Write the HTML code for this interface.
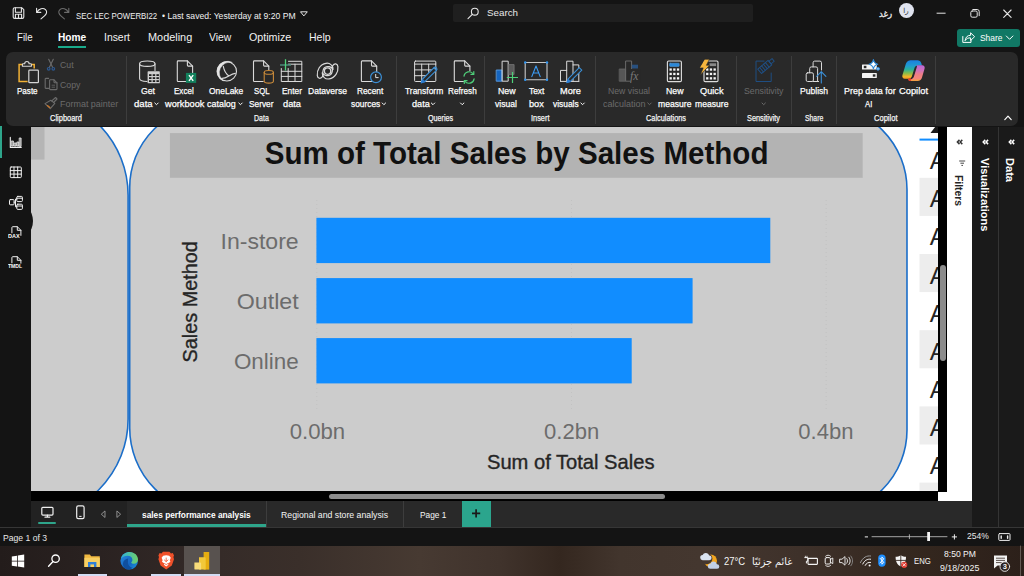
<!DOCTYPE html>
<html lang="en">
<head>
<meta charset="utf-8">
<title>SEC LEC POWERBI22</title>
<style>
*{box-sizing:border-box;margin:0;padding:0}
html,body{width:1024px;height:576px;overflow:hidden;background:#141414}
body{position:relative;font-family:"Liberation Sans","DejaVu Sans",sans-serif;color:#fff;font-size:9.3px}
.abs{position:absolute}
.t{position:absolute;white-space:nowrap;line-height:1;transform-origin:0 0;color:#fff}
svg{position:absolute;left:0;top:0;overflow:hidden}
#ribbon{left:6px;top:52.200px;width:1011.600px;height:73.700px;background:#292929;border-radius:7px}
.sep{position:absolute;top:55.500px;width:1px;height:68px;background:#3d3d3d}
#rail{left:0;top:127px;width:30.500px;height:400px;background:#141414}
#canvas{left:30.500px;top:127px;width:907.500px;height:364.300px;background:#fff;overflow:hidden}
#vscroll{left:938px;top:127px;width:9.200px;height:364.500px;background:#000}
#hscroll{left:30.500px;top:491.300px;width:907.500px;height:9.700px;background:#000}
#filters{left:938px;top:127px;width:33.800px;height:374px;background:#fff}
#viz{left:971.800px;top:127px;width:26.200px;height:400.400px;background:#1a1a1a}
#data{left:998px;top:127px;width:26px;height:400.400px;background:#1a1a1a;border-left:1px solid #343434}
.vt{position:absolute;white-space:nowrap;transform-origin:0 0;line-height:1}
#tabs{left:30.500px;top:501px;width:941.300px;height:26.400px;background:#222}
#status{left:0;top:527px;width:1024px;height:19px;background:#141414;border-top:1px solid #363636}
#taskbar{left:0;top:546px;width:1024px;height:30px;background:linear-gradient(90deg,#231c1b 0.0%,#2a2221 9.8%,#352b28 21.5%,#3a2f2a 29.3%,#473a32 41.0%,#40332c 48.8%,#34271f 54.7%,#42352d 60.5%,#44372f 68.4%,#3e312a 78.1%,#35281f 87.9%,#2c201a 100.0%)}
</style>
</head>
<body>

<!-- ===== TITLE BAR ===== -->
<div class="abs" style="left:453px;top:4px;width:300px;height:18px;background:#1f1f1f;border-radius:2px"></div>
<span class="t" style="left:487.00px;top:8.47px;font-size:9.6px;color:#e8e8e8;transform:scaleX(1.020);">Search</span>
<span class="t" style="left:76.40px;top:10.97px;font-size:9.6px;color:#f0f0f0;transform:scaleX(0.814);">SEC LEC POWERBI22</span>
<span class="t" style="left:162.00px;top:10.97px;font-size:9.6px;color:#f0f0f0;transform:scaleX(0.897);">• Last saved: Yesterday at 9:20 PM</span>
<div class="abs" style="left:898.700px;top:2.700px;width:15.600px;height:15.600px;border-radius:50%;background:#dfe3ef"></div>
<span class="t" style="left:879.00px;top:8.96px;font-size:9.5px;color:#f0f0f0;font-family:'Liberation Sans','DejaVu Sans',sans-serif;transform:scaleX(0.894);-webkit-text-stroke:0.3px #f0f0f0;direction:rtl;">رغد</span>
<span class="t" style="left:903.20px;top:7.47px;font-size:7px;color:#2a2a2a;font-family:'Liberation Sans','DejaVu Sans',sans-serif;direction:rtl;">را</span>
<div class="abs" style="left:956.5px;top:28.5px;width:63px;height:18px;background:#117865;border-radius:3px"></div>
<span class="t" style="left:980.00px;top:33.17px;font-size:9.6px;transform:scaleX(0.879);">Share</span>
<!-- ===== MENU ===== -->
<span class="t" style="left:17.20px;top:32.43px;font-size:10.6px;color:#f2f2f2;transform:scaleX(0.914);">File</span>
<span class="t" style="left:58.00px;top:32.43px;font-size:10.6px;font-weight:700;transform:scaleX(0.958);">Home</span>
<div class="abs" style="left:58px;top:45.6px;width:28.2px;height:2px;background:#1aab8b"></div>
<span class="t" style="left:103.70px;top:32.43px;font-size:10.6px;color:#f2f2f2;transform:scaleX(0.981);">Insert</span>
<span class="t" style="left:147.50px;top:32.43px;font-size:10.6px;color:#f2f2f2;transform:scaleX(1.028);">Modeling</span>
<span class="t" style="left:209.30px;top:32.43px;font-size:10.6px;color:#f2f2f2;transform:scaleX(0.979);">View</span>
<span class="t" style="left:249.20px;top:32.43px;font-size:10.6px;color:#f2f2f2;transform:scaleX(1.010);">Optimize</span>
<span class="t" style="left:309.00px;top:32.43px;font-size:10.6px;color:#f2f2f2;transform:scaleX(0.991);">Help</span>
<svg width="1024" height="52" viewBox="0 0 1024 52" fill="none" stroke="#e6e6e6" stroke-width="1.1" stroke-linecap="round" stroke-linejoin="round">
<!-- save -->
<path d="M13.2 9.3a1.5 1.5 0 0 1 1.5-1.5h7.2l1.9 1.9v7.2a1.5 1.5 0 0 1-1.5 1.5h-7.6a1.5 1.5 0 0 1-1.5-1.5z"/>
<path d="M15.4 7.9v4.4h6V7.9M15.4 18.3v-4h6.2v4M18.5 14.5v3.6"/>
<!-- undo -->
<path d="M36.6 8.2v4.2h4.2M36.9 12.2c2-3.6 6.2-4.800 8.600-2.600 2.2 2.100 .9 4.600-1 6.300l-3.500 3"/>
<!-- redo -->
<path stroke="#6b6b6b" d="M68.800 8.200v4.200h-4.200M68.500 12.200c-2-3.600-6.200-4.800-8.600-2.600-2.200 2.100-.9 4.600 1 6.300l3.500 3"/>
<!-- title dropdown -->
<path stroke-width="1" d="M300.900 11.800h6.400l-3.200 3.800z"/>
<!-- search icon -->
<circle cx="474.800" cy="11.700" r="3.400"/><path d="M472.300 14.300l-4.300 4.300"/>
<!-- window controls -->
<path stroke-width="1" d="M937 13.200h8.200"/>
<rect x="970.800" y="11" width="6.400" height="6.200" rx="1.400" stroke-width="1"/><path stroke-width="1" d="M972.800 9.500h4.400a2 2 0 0 1 2 2v4.200"/>
<path stroke-width="1.100" d="M1003.700 10l7.400 7.400M1011.100 10l-7.400 7.400"/>
<!-- share icon -->
<path stroke="#fff" stroke-width="1" d="M962.800 36.500v5.900h8.200v-2M965.200 40.300c.3-3.200 2.300-5 5.400-5v-2.500l4 3.900-4 3.800v-2.600c-2.400-.2-4.100.6-5.400 2.400z"/>
<path stroke="#fff" stroke-width="1" d="M1006.300 36l3.300 3.300 3.300-3.300"/>
</svg>
<!-- ===== RIBBON ===== -->
<div id="ribbon" class="abs"></div>
<div class="sep" style="left:125.9px"></div>
<div class="sep" style="left:395.9px"></div>
<div class="sep" style="left:484.0px"></div>
<div class="sep" style="left:595.3px"></div>
<div class="sep" style="left:736.0px"></div>
<div class="sep" style="left:790.5px"></div>
<div class="sep" style="left:835.9px"></div>
<div class="sep" style="left:934.6px"></div>
<span class="t" style="left:16.90px;top:86.34px;font-size:9.4px;transform:scaleX(0.859);-webkit-text-stroke:0.25px #fff;">Paste</span>
<span class="t" style="left:60.00px;top:60.04px;font-size:9.4px;color:#6b6b6b;transform:scaleX(0.932);">Cut</span>
<span class="t" style="left:60.00px;top:79.64px;font-size:9.4px;color:#6b6b6b;transform:scaleX(0.937);">Copy</span>
<span class="t" style="left:60.00px;top:99.04px;font-size:9.4px;color:#6b6b6b;transform:scaleX(0.956);">Format painter</span>
<span class="t" style="left:50.00px;top:114.05px;font-size:8.8px;color:#f4f4f4;transform:scaleX(0.850);-webkit-text-stroke:0.25px #f4f4f4;">Clipboard</span>
<span class="t" style="left:140.80px;top:86.34px;font-size:9.4px;transform:scaleX(0.926);-webkit-text-stroke:0.25px #fff;">Get</span>
<span class="t" style="left:134.40px;top:98.74px;font-size:9.4px;transform:scaleX(1.019);-webkit-text-stroke:0.25px #fff;">data</span>
<span class="t" style="left:174.40px;top:86.34px;font-size:9.4px;transform:scaleX(0.859);-webkit-text-stroke:0.25px #fff;">Excel</span>
<span class="t" style="left:164.50px;top:98.74px;font-size:9.4px;transform:scaleX(0.982);-webkit-text-stroke:0.25px #fff;">workbook</span>
<span class="t" style="left:208.70px;top:86.34px;font-size:9.4px;transform:scaleX(0.901);-webkit-text-stroke:0.25px #fff;">OneLake</span>
<span class="t" style="left:207.20px;top:98.74px;font-size:9.4px;transform:scaleX(0.953);-webkit-text-stroke:0.25px #fff;">catalog</span>
<span class="t" style="left:253.60px;top:86.34px;font-size:9.4px;transform:scaleX(0.832);-webkit-text-stroke:0.25px #fff;">SQL</span>
<span class="t" style="left:249.20px;top:98.74px;font-size:9.4px;transform:scaleX(0.887);-webkit-text-stroke:0.25px #fff;">Server</span>
<span class="t" style="left:281.80px;top:86.34px;font-size:9.4px;transform:scaleX(0.893);-webkit-text-stroke:0.25px #fff;">Enter</span>
<span class="t" style="left:282.50px;top:98.74px;font-size:9.4px;transform:scaleX(0.986);-webkit-text-stroke:0.25px #fff;">data</span>
<span class="t" style="left:308.30px;top:86.34px;font-size:9.4px;transform:scaleX(0.913);-webkit-text-stroke:0.25px #fff;">Dataverse</span>
<span class="t" style="left:356.70px;top:86.34px;font-size:9.4px;transform:scaleX(0.885);-webkit-text-stroke:0.25px #fff;">Recent</span>
<span class="t" style="left:350.50px;top:98.74px;font-size:9.4px;transform:scaleX(0.890);-webkit-text-stroke:0.25px #fff;">sources</span>
<span class="t" style="left:254.40px;top:114.05px;font-size:8.8px;color:#f4f4f4;transform:scaleX(0.796);-webkit-text-stroke:0.25px #f4f4f4;">Data</span>
<span class="t" style="left:405.40px;top:86.34px;font-size:9.4px;transform:scaleX(0.902);-webkit-text-stroke:0.25px #fff;">Transform</span>
<span class="t" style="left:411.60px;top:98.74px;font-size:9.4px;transform:scaleX(0.976);-webkit-text-stroke:0.25px #fff;">data</span>
<span class="t" style="left:448.00px;top:86.34px;font-size:9.4px;transform:scaleX(0.874);-webkit-text-stroke:0.25px #fff;">Refresh</span>
<span class="t" style="left:428.40px;top:114.05px;font-size:8.8px;color:#f4f4f4;transform:scaleX(0.812);-webkit-text-stroke:0.25px #f4f4f4;">Queries</span>
<span class="t" style="left:497.50px;top:86.34px;font-size:9.4px;transform:scaleX(0.938);-webkit-text-stroke:0.25px #fff;">New</span>
<span class="t" style="left:495.10px;top:98.74px;font-size:9.4px;transform:scaleX(0.918);-webkit-text-stroke:0.25px #fff;">visual</span>
<span class="t" style="left:528.70px;top:86.34px;font-size:9.4px;transform:scaleX(0.896);-webkit-text-stroke:0.25px #fff;">Text</span>
<span class="t" style="left:528.70px;top:98.74px;font-size:9.4px;transform:scaleX(0.979);-webkit-text-stroke:0.25px #fff;">box</span>
<span class="t" style="left:559.60px;top:86.34px;font-size:9.4px;transform:scaleX(0.983);-webkit-text-stroke:0.25px #fff;">More</span>
<span class="t" style="left:553.20px;top:98.74px;font-size:9.4px;transform:scaleX(0.893);-webkit-text-stroke:0.25px #fff;">visuals</span>
<span class="t" style="left:531.10px;top:114.05px;font-size:8.8px;color:#f4f4f4;transform:scaleX(0.841);-webkit-text-stroke:0.25px #f4f4f4;">Insert</span>
<span class="t" style="left:608.00px;top:86.34px;font-size:9.4px;color:#6b6b6b;transform:scaleX(0.927);">New visual</span>
<span class="t" style="left:603.40px;top:98.74px;font-size:9.4px;color:#6b6b6b;transform:scaleX(0.962);">calculation</span>
<span class="t" style="left:666.00px;top:86.34px;font-size:9.4px;transform:scaleX(0.933);-webkit-text-stroke:0.25px #fff;">New</span>
<span class="t" style="left:658.00px;top:98.74px;font-size:9.4px;transform:scaleX(0.918);-webkit-text-stroke:0.25px #fff;">measure</span>
<span class="t" style="left:699.50px;top:86.34px;font-size:9.4px;transform:scaleX(0.985);-webkit-text-stroke:0.25px #fff;">Quick</span>
<span class="t" style="left:695.10px;top:98.74px;font-size:9.4px;transform:scaleX(0.916);-webkit-text-stroke:0.25px #fff;">measure</span>
<span class="t" style="left:646.00px;top:114.05px;font-size:8.8px;color:#f4f4f4;transform:scaleX(0.835);-webkit-text-stroke:0.25px #f4f4f4;">Calculations</span>
<span class="t" style="left:744.10px;top:86.34px;font-size:9.4px;color:#6b6b6b;transform:scaleX(0.936);">Sensitivity</span>
<span class="t" style="left:747.20px;top:114.05px;font-size:8.8px;color:#f4f4f4;transform:scaleX(0.833);-webkit-text-stroke:0.25px #f4f4f4;">Sensitivity</span>
<span class="t" style="left:799.60px;top:86.34px;font-size:9.4px;transform:scaleX(0.914);-webkit-text-stroke:0.25px #fff;">Publish</span>
<span class="t" style="left:804.90px;top:114.05px;font-size:8.8px;color:#f4f4f4;transform:scaleX(0.775);-webkit-text-stroke:0.25px #f4f4f4;">Share</span>
<span class="t" style="left:844.20px;top:86.34px;font-size:9.4px;transform:scaleX(0.952);-webkit-text-stroke:0.25px #fff;">Prep data for</span>
<span class="t" style="left:865.40px;top:98.74px;font-size:9.4px;transform:scaleX(0.824);-webkit-text-stroke:0.25px #fff;">AI</span>
<span class="t" style="left:898.50px;top:86.34px;font-size:9.4px;transform:scaleX(0.994);-webkit-text-stroke:0.25px #fff;">Copilot</span>
<span class="t" style="left:873.90px;top:114.05px;font-size:8.8px;color:#f4f4f4;transform:scaleX(0.858);-webkit-text-stroke:0.25px #f4f4f4;">Copilot</span>
<svg width="1024" height="130" viewBox="0 0 1024 130" fill="none" stroke-width="1.1" stroke-linejoin="round" stroke-linecap="round">
<path d="M154.8 103.0l1.7 1.7 1.7-1.7" stroke="#fff" stroke-width="1" fill="none"/>
<path d="M238.8 103.0l1.7 1.7 1.7-1.7" stroke="#fff" stroke-width="1" fill="none"/>
<path d="M382.2 103.0l1.7 1.7 1.7-1.7" stroke="#fff" stroke-width="1" fill="none"/>
<path d="M431.3 103.0l1.7 1.7 1.7-1.7" stroke="#fff" stroke-width="1" fill="none"/>
<path d="M460.5 103.0l1.7 1.7 1.7-1.7" stroke="#fff" stroke-width="1" fill="none"/>
<path d="M580.9 103.0l1.7 1.7 1.7-1.7" stroke="#fff" stroke-width="1" fill="none"/>
<path d="M647.8 103.0l1.7 1.7 1.7-1.7" stroke="#6b6b6b" stroke-width="1" fill="none"/>
<path d="M762.0 103.0l1.7 1.7 1.7-1.7" stroke="#6b6b6b" stroke-width="1" fill="none"/>
<path d="M1004.800 119.600l3.200-3.400 3.200 3.400" stroke="#fff" stroke-width="1.2"/>
<path d="M22.600 64.400H19.100V81.400H27.600M31.200 64.400H34.200V68.600" stroke="#f2b134" stroke-width="1.5" stroke-linejoin="miter" stroke-linecap="butt"/>
<path d="M22.400 66.300V64.500a.8 .8 0 0 1 .8-.8H24.700a2.200 2.200 0 0 1 4.400 0H30.600a.8 .8 0 0 1 .8 .8V66.300z" stroke="#d8d8d8"/>
<rect x="28.800" y="70.100" width="9.600" height="12.600" rx=".8" stroke="#d4d4d4" stroke-width="1.200"/>
<path d="M48.700 59.200l4 8.300M53.300 59.200l-4 8.300" stroke="#6b6b6b"/><circle cx="48.700" cy="68.800" r="1.300" stroke="#2c578e" stroke-width="1.200"/><circle cx="53.300" cy="68.800" r="1.300" stroke="#2c578e" stroke-width="1.200"/>
<path d="M48.600 88.400H45.800a.6 .6 0 0 1-.6-.6V79a.6 .6 0 0 1 .6-.6H48.600" stroke="#6b6b6b"/><path d="M50.4 79.8H54.0L57 82.8V88.8a.8 .8 0 0 1-.8 .8H50.4a.8 .8 0 0 1-.8-.8V80.6a.8 .8 0 0 1 .8-.8z" stroke="#6b6b6b"/><path d="M54.0 79.8v2.2a.8 .8 0 0 0 .8 .8h2.2" stroke="#6b6b6b"/>
<path d="M52 85.200h2.600M52 87.200h2.600" stroke="#6b6b6b" stroke-width=".8"/>
<path d="M45 103.600L50.300 108.600L54.800 103.400L50.800 100.200z" stroke="#6b6b6b"/><path d="M51.800 100.900L55.600 97.500L57 99L53.600 102.500" stroke="#6b6b6b"/><path d="M47.400 105.600l2.400 2" stroke="#c8762a" stroke-width="1.300"/>
<ellipse cx="147.300" cy="63.700" rx="7.700" ry="2.700" stroke="#dadada"/><path d="M139.600 63.700V78.600c0 1.600 3 2.800 7.400 2.900M155 63.700V70.600" stroke="#dadada"/>
<rect x="147.600" y="71.300" width="12.200" height="12" rx=".6" fill="#cfcfcf" stroke="none"/>
<rect x="149.0" y="74.2" width="2.500" height="1.800" fill="#1e1e1e" stroke="none"/>
<rect x="152.7" y="74.2" width="2.500" height="1.800" fill="#1e1e1e" stroke="none"/>
<rect x="156.4" y="74.2" width="2.500" height="1.800" fill="#1e1e1e" stroke="none"/>
<rect x="149.0" y="77.2" width="2.500" height="1.800" fill="#1e1e1e" stroke="none"/>
<rect x="152.7" y="77.2" width="2.500" height="1.800" fill="#1e1e1e" stroke="none"/>
<rect x="156.4" y="77.2" width="2.500" height="1.800" fill="#1e1e1e" stroke="none"/>
<rect x="149.0" y="80.2" width="2.500" height="1.800" fill="#1e1e1e" stroke="none"/>
<rect x="152.7" y="80.2" width="2.500" height="1.800" fill="#1e1e1e" stroke="none"/>
<rect x="156.4" y="80.2" width="2.500" height="1.800" fill="#1e1e1e" stroke="none"/>
<path d="M178.1 60.9H187.4L192.6 66.1V80.7a.8 .8 0 0 1-.8 .8H178.1a.8 .8 0 0 1-.8-.8V61.7a.8 .8 0 0 1 .8-.8z" stroke="#dadada"/><path d="M187.4 60.9v4.4a.8 .8 0 0 0 .8 .8h4.4" stroke="#dadada"/>
<rect x="185.900" y="72.900" width="10.300" height="10" fill="#12805c" stroke="none"/>
<path d="M189 75.200l4.200 5.600M193.200 75.200l-4.200 5.600" stroke="#fff" stroke-width="1.400" stroke-linecap="butt"/>
<circle cx="226.900" cy="71.400" r="9.600" stroke="#dadada" stroke-width="1.100"/>
<path d="M231.900 62.300A10.300 10.300 0 1 0 223.300 81A10.600 10.600 0 0 1 231.900 62.300z" fill="#e4e4e4" stroke="#e4e4e4" stroke-width=".5"/>
<path d="M223.300 66.400c.8 4.200 2.600 7.400 5.600 9.600M221.600 78.400c5.200 .4 8.600-4.800 13.600-5" stroke="#dadada" stroke-width="1.100"/>
<path d="M254.3 60.9H263.6L268.8 66.1V80.7a.8 .8 0 0 1-.8 .8H254.3a.8 .8 0 0 1-.8-.8V61.7a.8 .8 0 0 1 .8-.8z" stroke="#dadada"/><path d="M263.6 60.9v4.4a.8 .8 0 0 0 .8 .8h4.4" stroke="#dadada"/>
<rect x="263.600" y="70" width="10.400" height="13.800" fill="#292929" stroke="none"/>
<ellipse cx="268.800" cy="72.400" rx="4.600" ry="1.900" stroke="#c98a3a"/><path d="M264.200 72.400V81.200c0 1.100 2 1.900 4.600 1.900s4.600-.8 4.600-1.900V72.400" stroke="#c98a3a"/>
<path d="M288.500 61.300H301.800V81.500H281.300V68.500M281.300 71.300H301.800M281.300 76.400H301.800M288.200 68.500V81.500M295 64.200V81.500M288.500 64.200H301.800" stroke="#dadada" stroke-width="1"/>
<path d="M280 65h11" stroke="#4a8a78" stroke-width="1.500" stroke-linecap="butt"/><path d="M285.500 59.200V70.500" stroke="#4fd07a" stroke-width="1.300" stroke-linecap="butt"/>
<circle cx="327.600" cy="71.100" r="3.200" stroke="#dadada" stroke-width="1.300"/>
<path d="M322.700 76.400C320.700 79.200 317.700 78.800 317.300 75.600C316.700 70.200 320 64.200 326 63.300C330 62.700 332.900 65.300 333 69.400C331.400 66.600 327.600 65.600 324.800 67.400C322 69.300 322.900 73.400 322.700 76.400z" stroke="#dadada" stroke-width="1.200"/>
<path d="M322.700 76.400C320.700 79.200 317.700 78.800 317.300 75.600C316.700 70.200 320 64.200 326 63.300C330 62.700 332.900 65.300 333 69.400C331.400 66.600 327.600 65.600 324.800 67.400C322 69.300 322.900 73.400 322.700 76.400z" stroke="#dadada" stroke-width="1.200" transform="rotate(180 327.600 71.100)"/>
<path d="M362.2 60.9H371.5L376.7 66.1V80.7a.8 .8 0 0 1-.8 .8H362.2a.8 .8 0 0 1-.8-.8V61.7a.8 .8 0 0 1 .8-.8z" stroke="#dadada"/><path d="M371.5 60.9v4.4a.8 .8 0 0 0 .8 .8h4.4" stroke="#dadada"/>
<circle cx="376" cy="77.300" r="5.400" fill="#292929" stroke="#3b8fd6" stroke-width="1.200"/><path d="M375.700 74.400V77.600H378.200" stroke="#e0e0e0" stroke-width="1"/>
<rect x="414.600" y="61.100" width="21.200" height="20.400" rx=".8" stroke="#dadada" stroke-width="1"/><path d="M414.600 64.100H435.800M414.600 69.900H435.800M414.600 75.700H428M421.700 64.100V81.500M428.700 64.100V74" stroke="#dadada" stroke-width="1"/>
<path d="M433.800 67.800l2.600 2.600-11.400 11-3.800 1.400 1.400-3.800z" fill="#292929" stroke="#3b8fd6" stroke-width="1.100"/><path d="M421.400 82.600l1.200-3.400 2.300 2.300z" fill="#2b7cd3" stroke="#2b7cd3" stroke-width=".8"/><path d="M433.800 67.800a1.800 1.800 0 0 1 2.600 2.600" stroke="#3b8fd6"/>
<path d="M455.1 60.9H464.7L469.9 66.1V80.7a.8 .8 0 0 1-.8 .8H455.1a.8 .8 0 0 1-.8-.8V61.7a.8 .8 0 0 1 .8-.8z" stroke="#dadada"/><path d="M464.7 60.9v4.4a.8 .8 0 0 0 .8 .8h4.4" stroke="#dadada"/>
<circle cx="469" cy="77.500" r="6.600" fill="#292929" stroke="none"/>
<path d="M464 76.200a5.200 5.200 0 0 1 9.400-2.200M474.100 78.800a5.200 5.200 0 0 1-9.400 2.200" stroke="#4fd07a" stroke-width="1.200"/><path d="M473.800 71.600v2.800h-2.800M464.300 83.400v-2.800h2.800" stroke="#4fd07a" stroke-width="1.200"/>
<rect x="496.600" y="70" width="5.400" height="11.200" fill="#1565c0" stroke="#5a9fe6" stroke-width=".9"/>
<rect x="502.500" y="61.200" width="5.700" height="20" stroke="#dadada" stroke-width="1"/>
<rect x="508.700" y="64.600" width="5.400" height="9.800" fill="#5a5a5a" stroke="#777" stroke-width=".8"/>
<path d="M506.800 77.500H518M512.500 72V83" stroke="#4fd07a" stroke-width="1.200" stroke-linecap="butt"/>
<rect x="525.200" y="62.500" width="21.800" height="17.300" stroke="#c8c8c8" stroke-width="1.100"/>
<circle cx="525.2" cy="62.5" r="1.200" fill="#2f96f3" stroke="none"/>
<circle cx="547" cy="62.5" r="1.200" fill="#2f96f3" stroke="none"/>
<circle cx="525.2" cy="79.8" r="1.200" fill="#2f96f3" stroke="none"/>
<circle cx="547" cy="79.8" r="1.200" fill="#2f96f3" stroke="none"/>
<path d="M531.800 76.600l4.200-10.600 4.200 10.600M533.400 73h5.400" stroke="#3b9cf5" stroke-width="1.100"/>
<path d="M560.500 81.400V70.400H566.700M566.700 81.400V61.200H573V81.400M573 64.900H578.800V81.400M560.500 81.400H578.800" stroke="#dadada" stroke-width="1"/>
<path d="M579.200 67.600l2.600 2.600-11.200 11-3.800 1.400 1.400-3.800z" fill="#292929" stroke="#3b8fd6" stroke-width="1.100"/><path d="M567 82.400l1.200-3.400 2.300 2.300z" fill="#2b7cd3" stroke="#2b7cd3" stroke-width=".8"/>
<rect x="619.600" y="69" width="6" height="12.200" fill="#565656" stroke="#6a6a6a" stroke-width=".8"/>
<rect x="626" y="61" width="5.600" height="20.200" stroke="#686868" stroke-width="1"/>
<rect x="631.800" y="64.700" width="6.200" height="3.800" fill="#28507f" stroke="none"/>
<rect x="630.500" y="69" width="10" height="14" fill="#292929" stroke="none"/>
<rect x="667.400" y="61" width="14" height="20.600" rx="1.200" stroke="#dcdcdc" stroke-width="1.150"/>
<rect x="669.600" y="63.200" width="9.600" height="3.200" rx=".6" fill="#2b88d8" stroke="#5aa6ea" stroke-width=".5"/>
<rect x="669.5" y="68.4" width="2.300" height="2.300" fill="#f4f4f4" stroke="none"/>
<rect x="673.2" y="68.4" width="2.300" height="2.300" fill="#f4f4f4" stroke="none"/>
<rect x="676.9" y="68.4" width="2.300" height="2.300" fill="#f4f4f4" stroke="none"/>
<rect x="669.5" y="72.8" width="2.300" height="2.300" fill="#f4f4f4" stroke="none"/>
<rect x="673.2" y="72.8" width="2.300" height="2.300" fill="#f4f4f4" stroke="none"/>
<rect x="676.9" y="72.8" width="2.300" height="2.300" fill="#f4f4f4" stroke="none"/>
<rect x="669.5" y="77.2" width="2.300" height="2.300" fill="#f4f4f4" stroke="none"/>
<rect x="673.2" y="77.2" width="2.300" height="2.300" fill="#f4f4f4" stroke="none"/>
<rect x="676.9" y="77.2" width="2.300" height="2.300" fill="#f4f4f4" stroke="none"/>
<rect x="704" y="61" width="14" height="20.600" rx="1.200" stroke="#dcdcdc" stroke-width="1.150"/>
<rect x="709.500" y="63.300" width="6.600" height="2.800" fill="#8a8a8a" stroke="none"/>
<rect x="706.1" y="68.4" width="2.300" height="2.300" fill="#f4f4f4" stroke="none"/>
<rect x="709.8" y="68.4" width="2.300" height="2.300" fill="#f4f4f4" stroke="none"/>
<rect x="713.5" y="68.4" width="2.300" height="2.300" fill="#f4f4f4" stroke="none"/>
<rect x="706.1" y="72.8" width="2.300" height="2.300" fill="#f4f4f4" stroke="none"/>
<rect x="709.8" y="72.8" width="2.300" height="2.300" fill="#f4f4f4" stroke="none"/>
<rect x="713.5" y="72.8" width="2.300" height="2.300" fill="#f4f4f4" stroke="none"/>
<rect x="706.1" y="77.2" width="2.300" height="2.300" fill="#f4f4f4" stroke="none"/>
<rect x="709.8" y="77.2" width="2.300" height="2.300" fill="#f4f4f4" stroke="none"/>
<rect x="713.5" y="77.2" width="2.300" height="2.300" fill="#f4f4f4" stroke="none"/>
<path d="M704.800 59.300h4.600l-3 6h3.200l-9.200 9.600 2.800-7h-3.600z" fill="#f5b53d" stroke="#292929" stroke-width=".6"/>
<path d="M764 61.100H756v20.400H771.200V73" stroke="#1f4e82" stroke-width="1"/>
<g transform="rotate(-40 766.5 65.500)" stroke="#1f4e82" stroke-width="1"><rect x="757.500" y="62.600" width="13.500" height="5.800"/><rect x="771" y="63.800" width="4.200" height="3.400"/><path d="M760 62.600v5.800M762.500 62.600v5.800M765 62.600v5.800M767.500 62.600v5.800"/></g>
<path d="M813.100 66.900V62.700a1.600 1.600 0 0 1 1.600-1.600H819.900a1.600 1.600 0 0 1 1.600 1.600V70" stroke="#dadada" stroke-width="1"/>
<path d="M809.700 72.800V68.500a1.600 1.600 0 0 1 1.600-1.600H816a1.600 1.600 0 0 1 1.600 1.600V81.500" stroke="#dadada" stroke-width="1"/>
<rect x="806.200" y="72.800" width="7.200" height="8.700" rx="1.400" stroke="#dadada" stroke-width="1"/><path d="M813.400 81.500H818.600" stroke="#dadada" stroke-width="1"/>
<path d="M821.300 83V72M816.700 76.400l4.600-4.700 4.600 4.700" stroke="#3b8fd6" stroke-width="1.100"/>
<rect x="862" y="64.400" width="14.800" height="5.200" rx=".6" fill="#f4f4f4" stroke="none"/><rect x="862" y="72.900" width="14.800" height="5.200" rx=".6" fill="#f4f4f4" stroke="none"/>
<rect x="863.800" y="65.800" width="2.600" height="2.400" fill="#2a2a2a" stroke="none"/><rect x="872.800" y="74.300" width="2.600" height="2.400" fill="#2a2a2a" stroke="none"/>
<path d="M873.400 59.600c.5 2.800 1.600 4 4.400 4.600-2.800 .6-3.900 1.800-4.400 4.600-.5-2.800-1.600-4-4.400-4.600 2.800-.6 3.900-1.800 4.400-4.600z" fill="#fff" stroke="#2b88d8" stroke-width="1.100"/>
<circle cx="878" cy="68.800" r="1.500" fill="#8cc4f5" stroke="#2b88d8" stroke-width=".8"/>
<defs><linearGradient id="cpL" x1="0" y1="0" x2="0" y2="1"><stop offset="0" stop-color="#1a7fe0"/><stop offset=".3" stop-color="#1f9bd0"/><stop offset=".5" stop-color="#2bb09a"/><stop offset=".7" stop-color="#86bb4a"/><stop offset=".88" stop-color="#f0b429"/><stop offset="1" stop-color="#f39a1e"/></linearGradient>
<linearGradient id="cpR" x1="0" y1="0" x2="0" y2="1"><stop offset="0" stop-color="#b865d6"/><stop offset=".35" stop-color="#d273b8"/><stop offset=".6" stop-color="#ef7e84"/><stop offset=".85" stop-color="#f4857a"/><stop offset="1" stop-color="#f2a33c"/></linearGradient></defs>
<path d="M907.800 61.200c1-1 2.600-.9 5-.9h4.600c2 0 3.200 1 3.800 2.600l.8 2.600h-4.200c-1.800 0-2.800 .9-3.400 2.800l-2.400 7.800c-.6 1.800-1.600 2.600-3.400 2.600h-3.800c-1.800 0-2.900-1.500-2.400-3.400l3.400-11.200c.4-1.300 1-2.200 2-2.900z" fill="url(#cpL)" stroke="none"/>
<path d="M916.600 65.200h5.600c1.800 0 2.900 1.500 2.400 3.400l-2.600 8.800c-.7 2.200-2 3.500-4.400 3.500h-6.400c-1.600 0-2.400-.6-2.900-1.800h2.300c1.800 0 2.800-.9 3.400-2.800l2.400-7.800c.4-1.300 .9-2.500 .2-3.300z" fill="url(#cpR)" stroke="none"/>
<circle cx="909.800" cy="79.400" r="1.500" fill="#ee3b2b" stroke="none"/>
</svg>
<span class="t" style="left:629.60px;top:68.60px;font-size:13px;color:#7a7a7a;font-family:'Liberation Serif',sans-serif;transform:scaleX(0.887);font-style:italic;">fx</span>
<!-- ===== REPORT CANVAS ===== -->
<div id="canvas" class="abs">
<svg width="907.500" height="364.300" viewBox="30.500 127 907.500 364.300" font-family="'Liberation Sans',sans-serif">
<path d="M0 95.300H27.600A100 100 0 0 1 127.600 195.300V419A100 100 0 0 1 27.600 519H0z" fill="#cccccc" stroke="#1b6ec9" stroke-width="1.600"/>
<rect x="30" y="127" width="14" height="32.600" fill="#b5b5b5"/>
<path d="M211.300 105.500H822.500A84 84 0 0 1 906.500 189.500V430.100A84 84 0 0 1 822.500 514.100H215.200A86 86 0 0 1 129.200 428.100V187.500A82 82 0 0 1 211.300 105.500z" fill="#cccccc"/>
<path d="M520 105.500H211.300A82 82 0 0 0 129.200 187.500V428.100A86 86 0 0 0 215.200 514.100H520" fill="none" stroke="#1b6ec9" stroke-width="1.600"/>
<path d="M520 105.500H822.500A84 84 0 0 1 906.500 189.500V430.100A84 84 0 0 1 822.500 514.100H520" fill="none" stroke="#1b6ec9" stroke-width="1.600"/>
<rect x="169.400" y="133.100" width="692.800" height="44.700" fill="#b3b3b3"/>
<text x="264.200" y="163.900" font-size="32" font-weight="700" fill="#111" textLength="503.800" lengthAdjust="spacingAndGlyphs">Sum of Total Sales by Sales Method</text>
<path d="M316.3 200V410" stroke="#c2c2c2" stroke-width="1" stroke-dasharray="1 3"/>
<path d="M571 200V410" stroke="#c2c2c2" stroke-width="1" stroke-dasharray="1 3"/>
<path d="M825.7 200V410" stroke="#c2c2c2" stroke-width="1" stroke-dasharray="1 3"/>
<rect x="315.900" y="217.800" width="453.900" height="45.300" fill="#118dff"/>
<rect x="315.900" y="278.100" width="376.200" height="45.300" fill="#118dff"/>
<rect x="315.900" y="338.100" width="315.300" height="45.300" fill="#118dff"/>
<g font-size="22" fill="#6c6c6c">
<text x="220" y="248.800" textLength="78.200" lengthAdjust="spacingAndGlyphs">In-store</text>
<text x="236.200" y="309.400" textLength="62" lengthAdjust="spacingAndGlyphs">Outlet</text>
<text x="233.400" y="369.400" textLength="64.800" lengthAdjust="spacingAndGlyphs">Online</text>
</g>
<g font-size="21.500" fill="#6c6c6c">
<text x="289.200" y="439.200" textLength="55.500" lengthAdjust="spacingAndGlyphs">0.0bn</text>
<text x="543.600" y="439.200" textLength="55.200" lengthAdjust="spacingAndGlyphs">0.2bn</text>
<text x="797.800" y="439.200" textLength="55.200" lengthAdjust="spacingAndGlyphs">0.4bn</text>
</g>
<text x="486.500" y="469.400" font-size="20" fill="#252525" stroke="#252525" stroke-width=".35" textLength="167.500" lengthAdjust="spacingAndGlyphs">Sum of Total Sales</text>
<text transform="translate(196.500 362.500) rotate(-90)" font-size="20" fill="#252525" stroke="#252525" stroke-width=".35" textLength="121.300" lengthAdjust="spacingAndGlyphs">Sales Method</text>
<rect x="919" y="138.600" width="20" height="2" fill="#118dff"/>
<path d="M930 133l5-6.500h4v6.500z" fill="#1a1a1a"/>
<text x="929.200" y="169.3" font-size="24" fill="#252525">A</text>
<rect x="919" y="177.8" width="20" height="38.1" fill="#ededed"/>
<text x="929.200" y="207.4" font-size="24" fill="#252525">A</text>
<text x="929.200" y="245.5" font-size="24" fill="#252525">A</text>
<rect x="919" y="254.0" width="20" height="38.1" fill="#ededed"/>
<text x="929.200" y="283.6" font-size="24" fill="#252525">A</text>
<text x="929.200" y="321.7" font-size="24" fill="#252525">A</text>
<rect x="919" y="330.2" width="20" height="38.1" fill="#ededed"/>
<text x="929.200" y="359.8" font-size="24" fill="#252525">A</text>
<text x="929.200" y="397.9" font-size="24" fill="#252525">A</text>
<rect x="919" y="406.4" width="20" height="38.1" fill="#ededed"/>
<text x="929.200" y="436.0" font-size="24" fill="#252525">A</text>
<text x="929.200" y="474.1" font-size="24" fill="#252525">A</text>
<rect x="919" y="482.6" width="20" height="38.1" fill="#ededed"/>
<text x="929.200" y="512.2" font-size="24" fill="#252525">A</text>
</svg>
</div>
<svg width="8" height="40" viewBox="30 201 8 40" style="left:30px;top:201px"><circle cx="12.600" cy="221" r="20.400" fill="#141414"/></svg>
<!-- ===== LEFT RAIL / SCROLLBARS / PANES ===== -->
<div id="rail" class="abs"></div>
<div class="abs" style="left:0;top:126.300px;width:2.300px;height:31.500px;background:#2ea58b"></div>
<div id="filters" class="abs"></div>
<div id="vscroll" class="abs"></div>
<div class="abs" style="left:939.600px;top:265px;width:6px;height:96px;border-radius:3px;background:#8c8c8c"></div>
<div id="hscroll" class="abs"></div>
<div class="abs" style="left:329px;top:493.600px;width:336px;height:5.800px;border-radius:3px;background:#8c8c8c"></div>
<div id="viz" class="abs"></div>
<div id="data" class="abs"></div>
<span class="vt" style="left:964.29px;top:175.30px;font-size:10.5px;font-weight:700;color:#252525;transform:rotate(90deg) scaleX(0.984);">Filters</span>
<span class="vt" style="left:989.71px;top:157.80px;font-size:11px;font-weight:700;color:#fff;transform:rotate(90deg) scaleX(1.003);">Visualizations</span>
<span class="vt" style="left:1015.11px;top:158.20px;font-size:11px;font-weight:700;color:#fff;transform:rotate(90deg) scaleX(1.007);">Data</span>
<svg width="1024" height="576" viewBox="0 0 1024 576" fill="none" stroke="#f0f0f0" stroke-width="1" stroke-linejoin="round" stroke-linecap="round" style="pointer-events:none">
<path d="M10.300 137.400V147.400H21.200" stroke-width="1.100"/><rect x="11.700" y="141" width="1.700" height="5" fill="#9a9a9a" stroke-width=".8"/><rect x="14.500" y="143" width="1.700" height="3" fill="#9a9a9a" stroke-width=".8"/><rect x="17.200" y="142" width="1.700" height="4" fill="#9a9a9a" stroke-width=".8"/><rect x="19.600" y="138" width="1.500" height="8.400" fill="#9a9a9a" stroke-width=".8"/>
<rect x="10.300" y="167" width="11" height="10.600" rx=".8"/><path d="M10.300 170.600H21.300M10.300 174.100H21.300M14 167V177.600M17.700 167V177.600"/>
<rect x="9.500" y="199.600" width="4.600" height="5.200" rx=".8"/><rect x="16.800" y="196.400" width="5.600" height="5.200" rx="1"/><rect x="16.800" y="204.200" width="5.600" height="5.200" rx="1"/><path d="M14.100 202.200h1.400M16.800 199H15.500V206.800H16.800M16.800 198.200h5.600M16.800 206h5.600"/>
<path d="M11.900 232.800V227.600a.9 .9 0 0 1 .9-.9H17.300L20.900 230.300V235.400M17.300 226.700V230.300H20.900" />
<path d="M11.900 262.800V257.600a.9 .9 0 0 1 .9-.9H17.300L20.900 260.300V263.200M17.300 256.700V260.300H20.900" />
<path d="M959.5 139.900l-2.100 2.100 2.100 2.100M962.3 139.900l-2.100 2.100 2.100 2.100" stroke="#333" stroke-width="1.500" stroke-linecap="butt" stroke-linejoin="miter"/>
<path d="M985.3 139.900l-2.100 2.100 2.100 2.100M988.1 139.900l-2.100 2.100 2.100 2.100" stroke="#fff" stroke-width="1.500" stroke-linecap="butt" stroke-linejoin="miter"/>
<path d="M1011.4 139.900l-2.100 2.100 2.100 2.100M1014.2 139.900l-2.100 2.100 2.100 2.100" stroke="#fff" stroke-width="1.500" stroke-linecap="butt" stroke-linejoin="miter"/>
<path d="M959.200 161h6M960.400 163.200h3.600M961.400 165.400h1.600" stroke="#333" stroke-width=".9" stroke-linecap="butt"/>
</svg>
<span class="t" style="left:8.10px;top:234.20px;font-size:5.2px;font-weight:700;transform:scaleX(1.068);">DAX</span>
<span class="t" style="left:8.30px;top:263.90px;font-size:5.2px;font-weight:700;transform:scaleX(0.979);">TMDL</span>
<!-- ===== PAGE TABS / STATUS / TASKBAR ===== -->
<div id="tabs" class="abs"></div>
<div class="abs" style="left:126.500px;top:501px;width:845.300px;height:26.400px;background:#292929"></div>
<div class="abs" style="left:126.500px;top:523.500px;width:139.700px;height:3.900px;background:#2ea58b"></div>
<div class="abs" style="left:265.600px;top:501px;width:1px;height:26px;background:#3d3d3d"></div>
<div class="abs" style="left:403.300px;top:501px;width:1px;height:26px;background:#3d3d3d"></div>
<div class="abs" style="left:461.900px;top:501px;width:29.200px;height:26.400px;background:#2ba58d"></div>
<div class="abs" style="left:38.400px;top:521.800px;width:17.800px;height:2.200px;border-radius:1px;background:#2ea58b"></div>
<span class="t" style="left:141.70px;top:510.04px;font-size:9.4px;font-weight:700;transform:scaleX(0.888);">sales performance analysis</span>
<span class="t" style="left:281.10px;top:510.04px;font-size:9.4px;color:#f4f4f4;transform:scaleX(0.930);">Regional and store analysis</span>
<span class="t" style="left:419.50px;top:510.04px;font-size:9.4px;color:#f4f4f4;transform:scaleX(0.888);">Page 1</span>
<div id="status" class="abs"></div>
<span class="t" style="left:3.30px;top:532.64px;font-size:9.4px;color:#e8e8e8;transform:scaleX(0.918);">Page 1 of 3</span>
<span class="t" style="left:967.20px;top:532.15px;font-size:8.8px;color:#e8e8e8;transform:scaleX(0.969);">254%</span>
<div id="taskbar" class="abs"></div>
<div class="abs" style="left:184.200px;top:546px;width:35.900px;height:30px;background:#58524f"></div>
<div class="abs" style="left:77.5px;top:574px;width:29.2px;height:2px;background:#d2dcf4"></div>
<div class="abs" style="left:150.5px;top:574px;width:30.3px;height:2px;background:#d2dcf4"></div>
<div class="abs" style="left:184.2px;top:574px;width:35.9px;height:2px;background:#d2dcf4"></div>
<span class="t" style="left:724.30px;top:556.87px;font-size:10.2px;color:#f4f4f4;transform:scaleX(0.931);">27°C</span>
<span class="t" style="left:752.20px;top:557.17px;font-size:10.2px;color:#f4f4f4;font-family:'Liberation Sans','DejaVu Sans',sans-serif;transform:scaleX(0.964);direction:rtl;">غائم جزئيًا</span>
<span class="t" style="left:913.90px;top:556.04px;font-size:9.4px;color:#f4f4f4;transform:scaleX(0.827);">ENG</span>
<span class="t" style="left:944.40px;top:549.24px;font-size:9.4px;color:#f4f4f4;transform:scaleX(0.917);">8:50 PM</span>
<span class="t" style="left:940.30px;top:563.24px;font-size:9.4px;color:#f4f4f4;transform:scaleX(0.942);">9/18/2025</span>
<svg width="1024" height="96" viewBox="0 480 1024 96" style="top:480px" fill="none" stroke="#f0f0f0" stroke-width="1" stroke-linejoin="round" stroke-linecap="round">
<rect x="41.800" y="507.300" width="11.200" height="7.800" rx="1" stroke-width="1.200"/><path d="M45 517.200h4.800M47.400 515.200v2" stroke-width="1.200"/>
<rect x="76.700" y="505.800" width="7.400" height="12.800" rx="1.600" stroke-width="1.200"/><path d="M79.600 516.400h1.600" stroke-width="1"/>
<path d="M104.700 511.200l-3.400 3 3.400 3z" stroke="#9a9a9a" stroke-width=".9"/><path d="M117.200 511.200l3.400 3-3.400 3z" stroke="#9a9a9a" stroke-width=".9"/>
<path d="M472 513.400h8.200M476.100 509.300v8.200" stroke="#1a1a1a" stroke-width="1.700" stroke-linecap="butt"/>
<path d="M865.200 536.900h2.400" stroke-width="1"/><path d="M872 536.700H947" stroke="#c8c8c8" stroke-width=".8"/><path d="M909.400 534.700v4" stroke="#c8c8c8" stroke-width=".8"/>
<rect x="927.200" y="532" width="2.800" height="9" fill="#f4f4f4" stroke="none"/>
<path d="M952.200 536.900h4.400M954.400 534.700v4.400" stroke-width="1"/>
<rect x="998.800" y="533.600" width="11.200" height="6.800" rx=".8" stroke-width="1"/><path d="M1001.200 536v2.200M1007.600 536v2.200" stroke-width="1.400"/>
<path d="M11.800 556.500l5.200-.8v5h-5.200zM17.800 555.600l6.400-1v6.100h-6.400zM11.800 561.500h5.200v5l-5.200-.8zM17.800 561.500h6.400v6.100l-6.400-1z" fill="#fff" stroke="none"/>
<circle cx="55.600" cy="558.700" r="3.700" stroke="#fff" stroke-width="1.300"/><path d="M53 561.600l-4.400 4.600" stroke="#fff" stroke-width="1.400"/>
<path d="M84.400 554.600h5.400l1.400 1.600h8.600v10.800H84.400z" fill="#f0b840" stroke="none"/><path d="M84.400 557.800h15.400v9.200H84.400z" fill="#f7cf63" stroke="none"/><path d="M88 562h8.400v5H88z" fill="#2f7fd8" stroke="none"/><path d="M90.400 564.400h3.600v2.600h-3.600z" fill="#f7cf63" stroke="none"/>
<defs><linearGradient id="edg" x1="0" y1="0" x2="1" y2="1"><stop offset="0" stop-color="#2a8fe0"/><stop offset=".6" stop-color="#1565c0"/><stop offset="1" stop-color="#1b9de2"/></linearGradient><linearGradient id="edg2" x1="0" y1="0" x2="1" y2="0"><stop offset="0" stop-color="#2fb3d6"/><stop offset="1" stop-color="#6fd06a"/></linearGradient></defs>
<circle cx="129.200" cy="560.800" r="8.800" fill="url(#edg)" stroke="none"/>
<path d="M121 558.600c1.200-4.400 4.800-6.600 8.600-6.600 5 0 8.400 3.800 8.400 7.600 0 2.600-1.800 4.200-4 4.200-1.600 0-2.600-.6-2.800-1.400 .8-.6 1.200-1.600 1.200-2.600 0-2.400-2.200-4-4.800-4-2.800 0-5.200 1.200-6.600 2.800z" fill="url(#edg2)" stroke="none"/>
<path d="M128 561.200c-.6 3.200 1.400 6 4.800 6.400-1 1.200-2.800 2-4.600 2-3.400-.4-5.600-3.400-5.200-6.400 .4-2.600 2.600-4.400 5.200-4.600-.2 .8-.2 1.800-.2 2.600z" fill="#0f4f9e" stroke="none"/>
<path d="M161.400 553.400l1.600-1.600h6.400l1.600 1.600 1.800-.4 1.200 2.400-.6 1.600 .6 2.200-2.200 6.400-5.600 3.800-5.600-3.800-2.200-6.400 .6-2.200-.6-1.600 1.200-2.400z" fill="#f0512a" stroke="none"/>
<path d="M166.200 555.200l3 .6 1.600 2-1 2.400 .6 1.600-2.400 1.600 .4 1.400-2.200 1.800-2.200-1.800 .4-1.400-2.400-1.600 .6-1.600-1-2.400 1.600-2z" fill="#fff" stroke="none"/>
<path d="M166.200 558v3.400M164.400 560l1.800 1.600 1.800-1.600M164.600 563.600l1.600 1 1.600-1" stroke="#f0512a" stroke-width=".8"/>
<path d="M203.600 552h5.600v17.600h-5.600z" fill="#e6ad10" stroke="none"/><path d="M199 557.200h5.800a.9 .9 0 0 1 .9 .9v11.500H199z" fill="#f2c83a" stroke="none"/><path d="M194.400 562.400h5.800a.9 .9 0 0 1 .9 .9v6.300h-5.800a.9 .9 0 0 1-.9-.9z" fill="#f7dc7a" stroke="none"/>
<circle cx="710.600" cy="560.800" r="6.400" fill="#f2a51e" stroke="none"/><circle cx="706.800" cy="558.600" r="5.600" fill="#44372f" stroke="none"/>
<path d="M700.200 557.800a2.600 2.600 0 0 1 2.400-2.700 3.500 3.500 0 0 1 6.600 .5 2.300 2.300 0 0 1 .2 4.600H702.600a2.500 2.500 0 0 1-2.400-2.400z" fill="#d9e2f0" stroke="none"/>
<path d="M707.800 566.400a2.600 2.600 0 0 1 2.500-2.700 3.500 3.500 0 0 1 6.600 .5 2.300 2.300 0 0 1 .2 4.600H710.300a2.500 2.500 0 0 1-2.500-2.400z" fill="#c2d0e6" stroke="none"/>
<rect x="808" y="558.400" width="9.400" height="6" rx=".6" fill="#3e312a" stroke="#f4f4f4" stroke-width="1.100"/><path d="M804.800 557.600h3v3.600h-1.400v1.800" stroke="#f4f4f4" stroke-width="1"/><path d="M805.400 556.200v1.400M807 556.200v1.400" stroke="#f4f4f4" stroke-width=".8"/>
<rect x="825.200" y="557.600" width="5.200" height="6.400" rx="1.200" stroke="#f4f4f4" stroke-width="1"/><path d="M830.400 559.400l2.400-1.400v5.600l-2.400-1.400M825.600 556.200c1.400-1.400 3.600-1.400 5 0M825.600 565.400c1.400 1.400 3.600 1.400 5 0" stroke="#f4f4f4" stroke-width=".9"/>
<path d="M840 559.200h2l3-2.600v8.600l-3-2.600h-2z" stroke="#f4f4f4" stroke-width=".9"/><path d="M846.800 558.600c1 1.400 1 3.200 0 4.600M848.800 557.200c1.800 2.200 1.800 5.200 0 7.400" stroke="#f4f4f4" stroke-width=".9"/><path d="M850.800 556c2.400 2.800 2.400 7 0 9.800" stroke="#8a8a8a" stroke-width=".9"/>
<path d="M860.400 562.600c2.600-5.400 6.400-7.200 10.200-6.600" stroke="#9a9a9a" stroke-width="1"/><path d="M862.800 564c1.800-3.800 4.600-5.200 7.800-4.800M865.200 565.400c1.200-2.400 3-3.200 5.400-3" stroke="#f4f4f4" stroke-width="1"/><circle cx="869.600" cy="565.400" r="1" fill="#f4f4f4" stroke="none"/>
<rect x="878.200" y="554.400" width="7.400" height="12.400" rx="3.700" fill="#1e8fff" stroke="none"/><path d="M880 558.200l3.800 4.200-1.900 1.800v-7.200l1.900 1.800-3.800 4.200" stroke="#fff" stroke-width=".9"/>
<path d="M900.800 555.200c1.800 1.200 3.400 1.600 5.200 1.600 0 5-1.600 8-5.200 9.800-3.600-1.800-5.200-4.800-5.200-9.800 1.800 0 3.400-.4 5.200-1.600z" fill="#f4f4f4" stroke="none"/><path d="M900.800 555.200v11.400M895.600 560.400h10.400" stroke="#3a2c26" stroke-width=".9"/>
<circle cx="904.200" cy="564.800" r="3.100" fill="#e03c31" stroke="none"/><path d="M902.900 563.500l2.600 2.600M905.500 563.500l-2.600 2.600" stroke="#fff" stroke-width=".8"/>
<path d="M994 555.400h13v10h-9.400l-3.600 3z" fill="#f4f4f4" stroke="none"/><path d="M996.400 558.200h8.200M996.400 560.400h8.200M996.400 562.600h5" stroke="#33261f" stroke-width=".8"/>
<circle cx="1004.800" cy="566.600" r="4.800" fill="#2e2421" stroke="#e8e8e8" stroke-width=".9"/>
<path d="M1020.500 546v30" stroke="#6a605a" stroke-width=".9"/>
</svg>
<span class="t" style="left:1002.70px;top:562.87px;font-size:7.6px;color:#f4f4f4;font-weight:700;">3</span>
</body>
</html>
